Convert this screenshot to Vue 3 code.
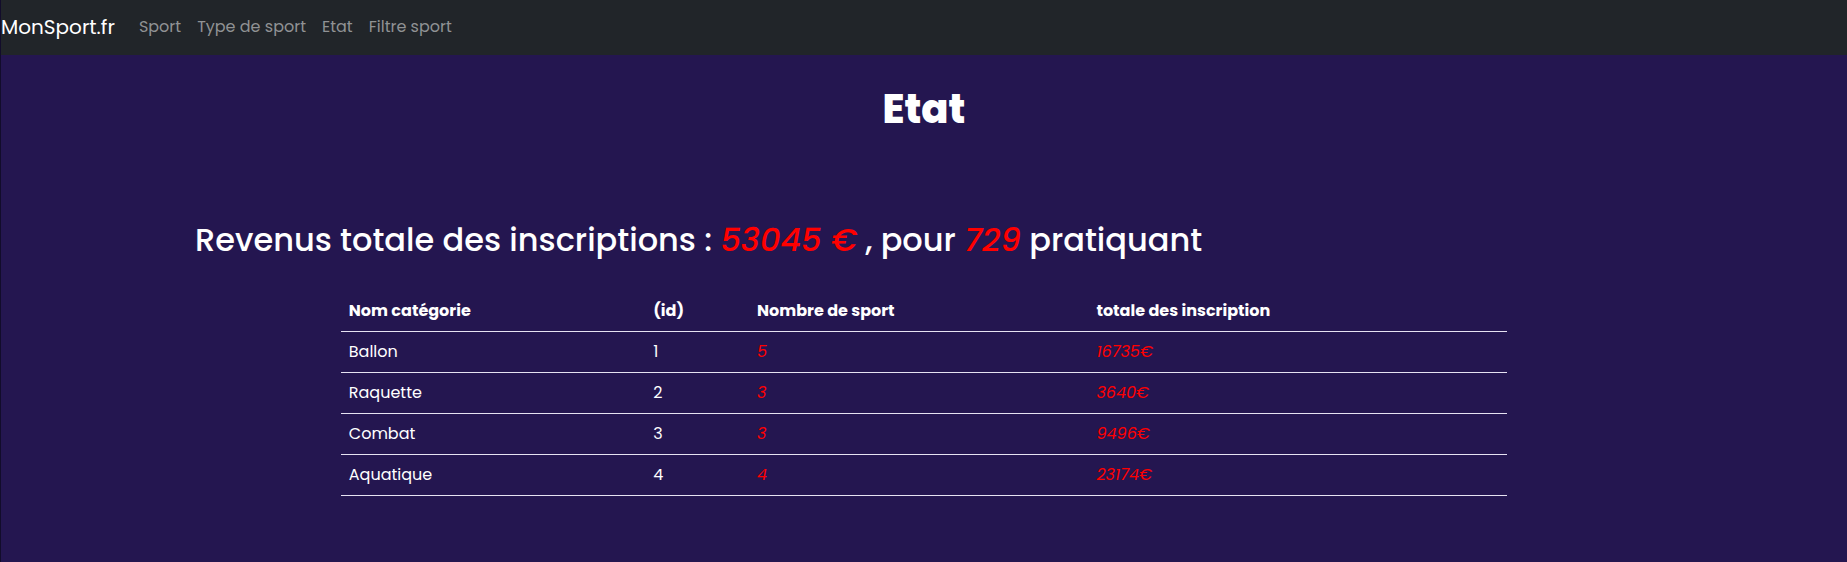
<script setup>
const links = ['Sport', 'Type de sport', 'Etat', 'Filtre sport']
const revenue = 53045
const members = 729
const categories = [
  { id: 1, name: 'Ballon', sports: 5, total: 16735 },
  { id: 2, name: 'Raquette', sports: 3, total: 3640 },
  { id: 3, name: 'Combat', sports: 3, total: 9496 },
  { id: 4, name: 'Aquatique', sports: 4, total: 23174 },
]
</script>

<template>
  <div class="page">
    <nav class="navbar">
      <a class="brand" href="#">MonSport.fr</a>
      <a v-for="link in links" :key="link" class="nav-link" href="#">{{ link }}</a>
    </nav>
    <main class="content">
      <h1 class="title">Etat</h1>
      <h2 class="summary">
        Revenus totale des inscriptions : <em>{{ revenue }} €</em> , pour <em>{{ members }}</em> pratiquant
      </h2>
      <table class="table">
        <colgroup>
          <col class="col-name" />
          <col class="col-id" />
          <col class="col-count" />
          <col class="col-total" />
        </colgroup>
        <thead>
          <tr>
            <th scope="col">Nom catégorie</th>
            <th scope="col">(id)</th>
            <th scope="col">Nombre de sport</th>
            <th scope="col">totale des inscription</th>
          </tr>
        </thead>
        <tbody>
          <tr v-for="category in categories" :key="category.id">
            <td>{{ category.name }}</td>
            <td>{{ category.id }}</td>
            <td><em>{{ category.sports }}</em></td>
            <td><em>{{ category.total }}€</em></td>
          </tr>
        </tbody>
      </table>
    </main>
  </div>
</template>

<style>
body {
  margin: 0;
  background: #241650;
}
</style>

<style scoped>
.page {
  box-sizing: border-box;
  min-height: 100vh;
  border-left: 1px solid #120c2b;
  background: #241650;
  color: #fff;
  font-family: Poppins, Inter, "Open Sans", sans-serif;
  font-size: 16px;
  line-height: 24px;
}

.navbar {
  display: flex;
  align-items: center;
  gap: 16px;
  padding: 12px 0 13px;
  background: #212529;
}

.navbar a {
  text-decoration: none;
  white-space: nowrap;
}

.brand {
  margin-right: 8px;
  color: #fff;
  font-size: 20px;
  line-height: 30px;
}

.nav-link {
  color: #909294;
}

.content {
  margin: 0 194px;
}

.title {
  margin: 0;
  padding-top: 30px;
  font-size: 40px;
  font-weight: 800;
  line-height: 48px;
  text-align: center;
}

.summary {
  margin: 88px 0 32px;
  font-size: 32px;
  font-weight: 500;
  line-height: 38px;
}

em {
  color: #f00;
}

.table {
  width: 80%;
  margin: 0 auto;
  border-collapse: collapse;
  table-layout: fixed;
}

.col-name {
  width: 26.1%;
}

.col-id {
  width: 8.9%;
}

.col-count {
  width: 29.1%;
}

.col-total {
  width: 35.9%;
}

.table th,
.table td {
  padding: 8px;
  border-bottom: 1px solid #e6e2f2;
  text-align: left;
}

.table th {
  font-weight: 700;
}
</style>
